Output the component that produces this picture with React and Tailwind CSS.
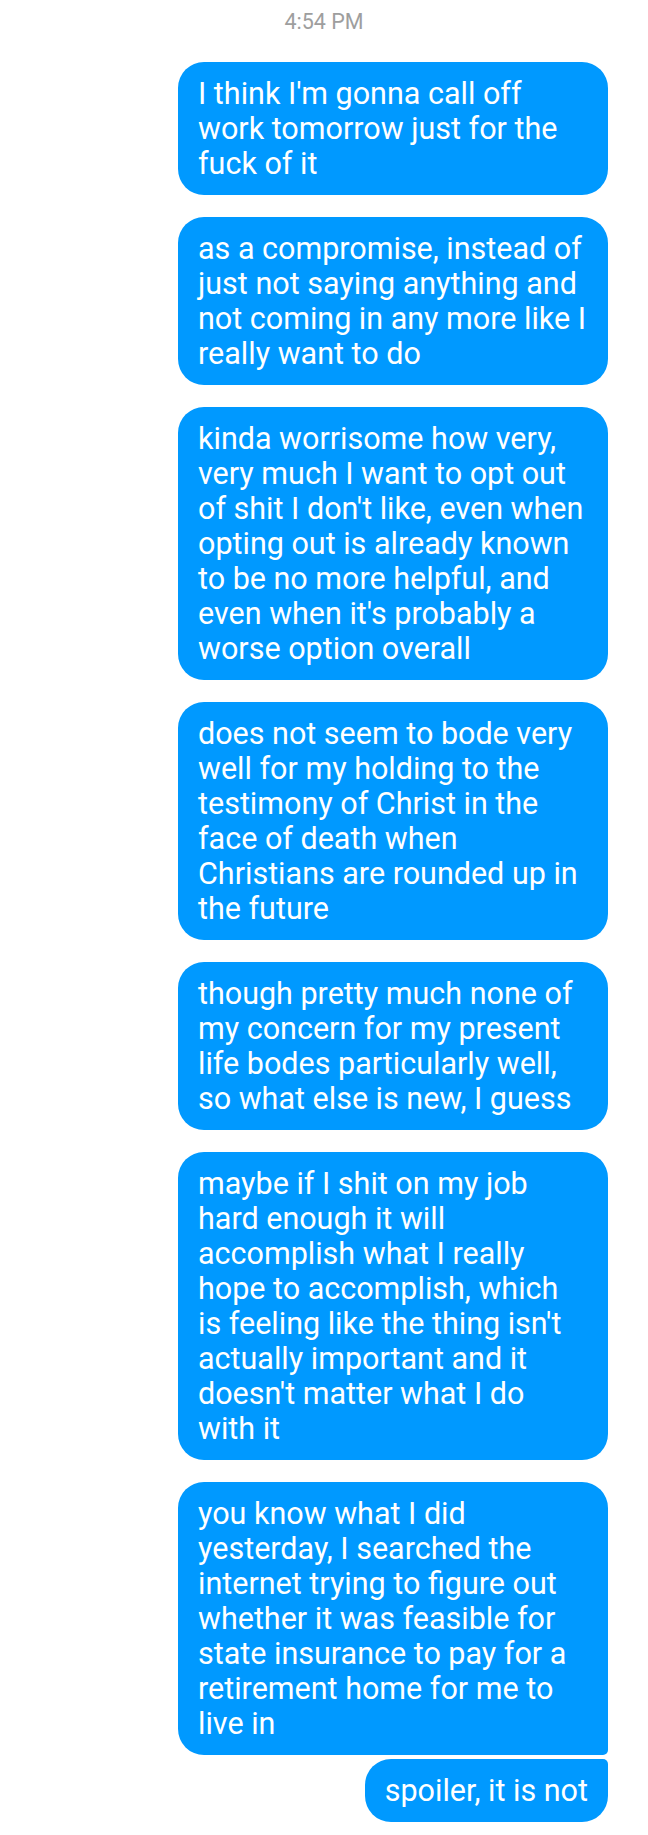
import React from "react";

const messages = [
  ["I think I'm gonna call off", "work tomorrow just for the", "fuck of it"],
  ["as a compromise, instead of", "just not saying anything and", "not coming in any more like I", "really want to do"],
  ["kinda worrisome how very,", "very much I want to opt out", "of shit I don't like, even when", "opting out is already known", "to be no more helpful, and", "even when it's probably a", "worse option overall"],
  ["does not seem to bode very", "well for my holding to the", "testimony of Christ in the", "face of death when", "Christians are rounded up in", "the future"],
  ["though pretty much none of", "my concern for my present", "life bodes particularly well,", "so what else is new, I guess"],
  ["maybe if I shit on my job", "hard enough it will", "accomplish what I really", "hope to accomplish, which", "is feeling like the thing isn't", "actually important and it", "doesn't matter what I do", "with it"],
  ["you know what I did", "yesterday, I searched the", "internet trying to figure out", "whether it was feasible for", "state insurance to pay for a", "retirement home for me to", "live in"],
];

export default function App() {
  return (
    <div
      className="w-[648px] min-h-[1835px] bg-white flex flex-col"
      style={{ fontFamily: "Roboto, 'Noto Sans', sans-serif" }}
    >
      <div className="h-[44px] flex items-center justify-center text-[21.5px] leading-none text-[#9e9e9e]">
        4:54 PM
      </div>
      <div className="flex flex-col items-end pr-[40px] pt-[18px] pb-[11px]">
        {messages.map((lines, i) => (
          <div
            key={i}
            className={
              "w-[430px] bg-[#0099ff] text-white text-[30.5px] leading-[35px] px-[20px] py-[14px] " +
              (i === 0 ? "" : "mt-[22px] ") +
              (i === messages.length - 1
                ? "rounded-tl-[26px] rounded-tr-[26px] rounded-bl-[26px] rounded-br-[5px]"
                : "rounded-[26px]")
            }
          >
            {lines.map((l, j) => (
              <div key={j} className="whitespace-nowrap">
                {l}
              </div>
            ))}
          </div>
        ))}
        <div className="mt-[4px] bg-[#0099ff] text-white text-[30.5px] leading-[35px] px-[20px] py-[14px] rounded-tl-[26px] rounded-tr-[5px] rounded-bl-[26px] rounded-br-[26px] whitespace-nowrap">
          spoiler, it is not
        </div>
      </div>
    </div>
  );
}
